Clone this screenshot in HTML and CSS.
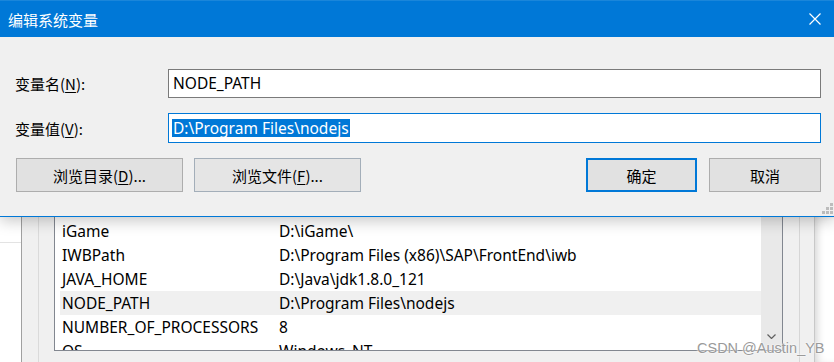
FILE: index.html
```html
<!DOCTYPE html>
<html lang="zh-CN">
<head>
    <meta charset="UTF-8">
    <title>编辑系统变量</title>
    <link rel="stylesheet" href="styles.css">
</head>
<body>

    <div class="dialog">
        <div class="title-bar">
            <span class="title">编辑系统变量</span>
            <svg class="close-icon" width="12" height="12" viewBox="0 0 12 12">
                <path d="M0.5 0.5 L11.5 11.5 M11.5 0.5 L0.5 11.5" stroke="#fff" stroke-width="1.2" fill="none"/>
            </svg>
        </div>
        <div class="dialog-body">
            <div class="field-row">
                <label class="field-label">变量名(<u>N</u>):</label>
                <div class="text-input">NODE_PATH</div>
            </div>
            <div class="field-row">
                <label class="field-label">变量值(<u>V</u>):</label>
                <div class="text-input focused"><span class="selected">D:\Program Files\nodejs</span></div>
            </div>
            <div class="button-row">
                <button class="btn">浏览目录(<u>D</u>)...</button>
                <button class="btn btn-hover">浏览文件(<u>F</u>)...</button>
                <span class="spacer"></span>
                <button class="btn btn-default">确定</button>
                <button class="btn">取消</button>
            </div>
        </div>
        <div class="grip">
            <i></i><i></i><i></i><i></i><i></i><i></i>
        </div>
    </div>

    <div class="back-window">
        <div class="side-pane"><div class="side-sep"></div></div>
        <div class="gutter"></div>
        <div class="gutter-b"></div>
        <div class="list-box">
            <div class="list-rows">
                <div class="list-row"><span class="col-name">iGame</span><span>D:\iGame\</span></div>
                <div class="list-row"><span class="col-name">IWBPath</span><span>D:\Program Files (x86)\SAP\FrontEnd\iwb</span></div>
                <div class="list-row"><span class="col-name">JAVA_HOME</span><span>D:\Java\jdk1.8.0_121</span></div>
                <div class="list-row current"><span class="col-name">NODE_PATH</span><span>D:\Program Files\nodejs</span></div>
                <div class="list-row"><span class="col-name">NUMBER_OF_PROCESSORS</span><span>8</span></div>
                <div class="list-row"><span class="col-name">OS</span><span>Windows_NT</span></div>
            </div>
            <div class="scroll-bar">
                <svg class="scroll-down" width="9" height="5" viewBox="0 0 9 5">
                    <path d="M0.5 0.5 L4.5 4.5 L8.5 0.5" stroke="#606060" stroke-width="1.2" fill="none"/>
                </svg>
            </div>
        </div>
        <div class="frame-a"></div>
        <div class="frame-b"></div>
        <div class="desktop"></div>
        <div class="watermark">CSDN @Austin_YB</div>
    </div>

</body>
</html>
```

FILE: styles.css
```css
* {
    margin: 0;
    padding: 0;
    box-sizing: border-box;
}
body {
    width: 834px;
    height: 362px;
    overflow: hidden;
    background: #f0f0f0;
    font-family: "Noto Sans", "Noto Sans CJK SC", sans-serif;
    font-size: 15.5px;
    color: #000;
}
u {
    text-decoration-thickness: 1px;
    text-underline-offset: 2px;
}
.dialog {
    position: relative;
    z-index: 1;
    height: 217px;
    background: #f0f0f0;
    border-bottom: 1px solid #0078d7;
    box-shadow: 0 4px 14px rgba(0, 0, 0, 0.22);
}
.title-bar {
    height: 37px;
    background: #0078d7;
    border-top: 1px solid #1a86da;
    display: flex;
    align-items: center;
    padding: 0 13px 0 8px;
    color: #fff;
}
.title {
    flex: 1;
    font-family: "Noto Sans CJK SC", sans-serif;
    font-size: 15px;
    line-height: 1;
    padding-top: 1px;
}
.dialog-body {
    padding: 31px 13px 0 15px;
}
.field-row {
    display: flex;
    align-items: center;
    height: 30px;
    margin-bottom: 15px;
}
.field-label {
    width: 153px;
    font-family: "Noto Sans CJK SC", sans-serif;
    font-size: 15px;
    padding-top: 1px;
}
.text-input {
    flex: 1;
    height: 29px;
    background: #fff;
    border: 1px solid #7a7a7a;
    padding: 0 4px;
    display: flex;
    align-items: center;
    white-space: nowrap;
}
.text-input.focused {
    height: 30px;
    border-color: #0078d7;
    padding: 0 3px;
}
.selected {
    background: #0078d7;
    color: #fff;
    padding: 0 1px;
    line-height: 18px;
}
.button-row {
    display: flex;
    align-items: center;
    gap: 11px;
    margin-top: 6px;
    padding-left: 1px;
}
.spacer {
    flex: 1;
}
.btn {
    width: 167px;
    height: 34px;
    background: #e1e1e1;
    border: 1px solid #adadad;
    font-family: "Noto Sans CJK SC", sans-serif;
    font-size: 15px;
    color: #000;
}
.btn-hover {
    border-color: #a3aeb9;
    background: #e5e5e5;
}
.btn-default {
    width: 111px;
    border: 2px solid #0078d7;
    margin-right: 1px;
}
.btn-default + .btn {
    width: 112px;
}
.grip {
    position: absolute;
    right: 1px;
    bottom: 2px;
    display: grid;
    grid-template-columns: repeat(3, 3px);
    grid-template-rows: repeat(3, 3px);
    gap: 1px;
}
.grip i {
    background: #bcbcbc;
}
.grip i:nth-child(1) { grid-area: 1 / 3; }
.grip i:nth-child(2) { grid-area: 2 / 2; }
.grip i:nth-child(3) { grid-area: 2 / 3; }
.grip i:nth-child(4) { grid-area: 3 / 1; }
.grip i:nth-child(5) { grid-area: 3 / 2; }
.grip i:nth-child(6) { grid-area: 3 / 3; }
.close-icon {
    display: block;
}
.back-window {
    position: relative;
    width: 834px;
    height: 145px;
    display: flex;
    align-items: flex-start;
}
.side-pane {
    width: 22px;
    height: 145px;
    background: #fff;
    border-right: 1px solid #a0a0a0;
    padding-top: 25px;
}
.side-sep {
    border-top: 1px solid #e3e3e3;
}
.gutter {
    width: 17px;
    height: 145px;
    border-right: 1px solid #dadada;
}
.gutter-b {
    width: 15px;
}
.list-box {
    width: 729px;
    height: 134px;
    background: #fff;
    border-left: 1px solid #828790;
    border-right: 1px solid #828790;
    border-bottom: 1px solid #828790;
    display: flex;
    overflow: hidden;
}
.list-rows {
    flex: 1;
    padding: 2px 0 0 5px;
}
.list-row {
    display: flex;
    height: 24px;
    align-items: center;
    padding-left: 2px;
    white-space: nowrap;
}
.list-row.current {
    background: #f0f0f0;
}
.col-name {
    width: 217px;
}
.scroll-bar {
    width: 21px;
    height: 134px;
    background: #e9e9e9;
    position: relative;
}
.scroll-down {
    position: absolute;
    left: 6px;
    top: 117px;
}
.frame-a {
    width: 17px;
    height: 145px;
    border-right: 1px solid #d6d6d6;
}
.frame-b {
    width: 15px;
    height: 145px;
    border-right: 1px solid #c8c8c8;
}
.desktop {
    flex: 1;
    height: 145px;
    background: #fff;
    box-shadow: inset 6px 0 8px -4px rgba(0, 0, 0, 0.18);
}
.watermark {
    position: absolute;
    left: 697px;
    bottom: 6px;
    white-space: nowrap;
    font-family: "Liberation Sans", sans-serif;
    font-size: 14.5px;
    color: #9a9a9a;
    text-shadow: 0 0 2px #fff, 0 0 2px #fff;
}
```
